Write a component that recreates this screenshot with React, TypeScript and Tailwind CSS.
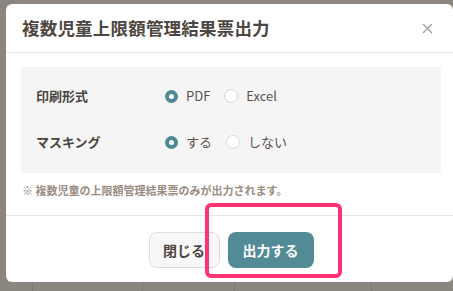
import React from "react";

const font = { fontFamily: '"Noto Sans CJK JP", "Noto Sans", sans-serif' };

interface RadioProps {
  label: string;
  checked?: boolean;
}

const Radio: React.FC<RadioProps> = ({ label, checked }) => (
  <label className="flex items-center gap-[8px] text-[13px] text-[#5b534d]">
    {checked ? (
      <span className="w-[13px] h-[13px] rounded-full bg-[#4e8994] flex items-center justify-center">
        <span className="w-[5px] h-[5px] rounded-full bg-white" />
      </span>
    ) : (
      <span className="w-[14px] h-[14px] rounded-full border border-[#d8d8d8] bg-white" />
    )}
    {label}
  </label>
);

// one row in the option panel
const OptionRow: React.FC<{ title: string; children: React.ReactNode }> = ({
  title,
  children,
}) => (
  <div className="flex items-center h-[22px]">
    <div className="w-[129px] text-[13px] font-bold text-[#4b4540]">{title}</div>
    <div className="flex items-center gap-[14px]">{children}</div>
  </div>
);

export default function App() {
  return (
    <div
      className="relative w-[453px] h-[291px] overflow-hidden bg-[#8b8680] pt-[4px] pl-[6px]"
      style={font}
    >
      {/* page behind the overlay */}
      <div className="absolute left-0 top-[282px] w-[453px] h-[9px] flex">
        <div className="w-[33px] border-r border-[#7c7771]" />
        <div className="w-[110px] border-r border-[#7c7771]" />
        <div className="w-[92px] border-r border-[#7c7771]" />
        <div className="w-[137px] border-r border-[#7c7771]" />
      </div>

      <div className="relative w-[447px] h-[278px] bg-white rounded-[6px] flex flex-col">
        {/* header */}
        <div className="h-[49px] flex items-center justify-between pl-[16px] pr-[16px] border-b border-[#e6e6e6]">
          <h1 className="text-[17.5px] font-bold text-[#4d4641] tracking-[0.2px]">
            複数児童上限額管理結果票出力
          </h1>
          <svg width="11" height="11" viewBox="0 0 11 11" className="mr-[4px]">
            <path d="M1 1L10 10M10 1L1 10" stroke="#a3a3a3" strokeWidth="1.4" />
          </svg>
        </div>

        {/* body */}
        <div className="pl-[15px] pr-[12px] pt-[14px] border-b border-[#e6e6e6] pb-[17px]">
          <div className="bg-[#f5f5f5] pl-[15px] pt-[18px] pb-[20px] flex flex-col gap-[24px]">
            <OptionRow title="印刷形式">
              <Radio label="PDF" checked />
              <Radio label="Excel" />
            </OptionRow>
            <OptionRow title="マスキング">
              <Radio label="する" checked />
              <Radio label="しない" />
            </OptionRow>
          </div>
          <p className="mt-[9px] pl-[1px] text-[11px] leading-[16px] font-bold text-[#9a8c7e]">
            ※ 複数児童の上限額管理結果票のみが出力されます。
          </p>
        </div>

        {/* footer */}
        <div className="flex-1 flex items-start justify-center gap-[8px] pt-[16px] pl-[3px]">
          <button className="w-[71px] h-[36px] rounded-[8px] border border-[#dcdcdc] bg-[#f8f8f8] text-[14px] font-bold text-[#4b4540]">
            閉じる
          </button>
          <button className="w-[86px] h-[36px] rounded-[8px] bg-[#528b96] text-[14px] font-bold text-white">
            出力する
          </button>
        </div>

        {/* highlight annotation */}
        <div className="absolute left-[199px] top-[199px] w-[137px] h-[75px] border-[4px] border-[#ff3372] rounded-[6px]" />
      </div>
    </div>
  );
}
